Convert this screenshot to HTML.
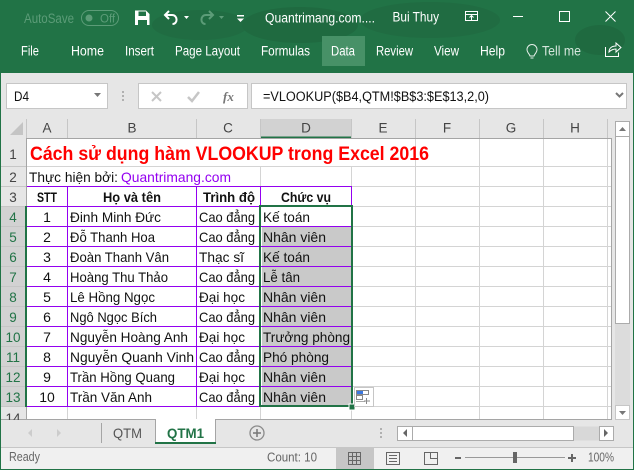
<!DOCTYPE html>
<html><head><meta charset="utf-8"><style>
html,body{margin:0;padding:0;background:#e6e6e6}
svg{display:block}
text{font-family:"Liberation Sans",sans-serif;white-space:pre}
.c{font-size:14px;fill:#111}
.b{font-size:14px;font-weight:bold;fill:#111}
.h{font-size:13.5px;fill:#444}
.r{font-size:13.5px;fill:#444;text-anchor:middle}
.w{font-size:13.5px;fill:#fff}
.l line,.l rect{shape-rendering:crispEdges}
</style></head><body>
<svg width="634" height="470" viewBox="0 0 634 470" xmlns="http://www.w3.org/2000/svg">
<!-- Title and ribbon -->
<rect width="634" height="73" fill="#217346"/>
<ellipse cx="200" cy="25" rx="48" ry="15" fill="#206c42"/>
<ellipse cx="300" cy="25" rx="58" ry="18" fill="#1f6a40"/>
<ellipse cx="430" cy="20" rx="70" ry="18" fill="#206c42"/>
<ellipse cx="600" cy="40" rx="25" ry="15" fill="#1f6a40"/>
<text x="24" y="23" class="w" style="fill:#5c9c78" textLength="50" lengthAdjust="spacingAndGlyphs">AutoSave</text>
<rect x="81.500" y="10.500" width="37" height="15" rx="7.500" fill="none" stroke="#5c9c78"/>
<circle cx="89" cy="18" r="3.500" fill="#5c9c78"/>
<text x="100" y="22.500" style="font-size:11.500px;fill:#5c9c78">Off</text>
<path d="M135 10.500h11l3.500 3.500v11h-14.500z" fill="#fff"/>
<rect x="138.500" y="11.500" width="7.500" height="4.500" fill="#217346"/>
<rect x="138" y="20" width="9" height="5" fill="#217346"/>
<path d="M169 11l-4 4 4 4M165.500 15h6.500c6 0 6 9 .5 9" fill="none" stroke="#fff" stroke-width="2"/>
<path d="M184 16h5l-2.500 3z" fill="#fff"/>
<path d="M209 11l4 4-4 4M212.500 15h-6.500c-6 0-6 9-.5 9" fill="none" stroke="#5c9c78" stroke-width="2"/>
<path d="M219 16h5l-2.500 3z" fill="#5c9c78"/>
<rect x="237" y="15" width="7" height="1.500" fill="#fff"/>
<path d="M237 18.500h7l-3.500 3.500z" fill="#fff"/>
<text x="265" y="22.500" class="w" style="font-size:13.500px" textLength="110" lengthAdjust="spacingAndGlyphs">Quantrimang.com....</text>
<text x="392.500" y="21.500" class="w" style="font-size:13.500px" textLength="46.500" lengthAdjust="spacingAndGlyphs">Bui Thuy</text>
<g fill="none" stroke="#fff">
<rect x="465.500" y="11.500" width="12" height="9"/>
<path d="M465 14.500h12M471.500 20v-4M469.500 17.500l2-2 2 2"/>
<path d="M513 16.500h10"/>
<rect x="559.500" y="11.500" width="10" height="10"/>
<path d="M605.500 11.500l10 10M615.500 11.500l-10 10"/>
</g>
<rect x="322" y="36" width="43" height="30" fill="#479167"/>
<g class="w">
<text x="21" y="55.500" class="w" textLength="18" lengthAdjust="spacingAndGlyphs">File</text>
<text x="71" y="55.500" class="w" textLength="33" lengthAdjust="spacingAndGlyphs">Home</text>
<text x="125" y="55.500" class="w" textLength="29" lengthAdjust="spacingAndGlyphs">Insert</text>
<text x="175" y="55.500" class="w" textLength="65" lengthAdjust="spacingAndGlyphs">Page Layout</text>
<text x="261" y="55.500" class="w" textLength="49" lengthAdjust="spacingAndGlyphs">Formulas</text>
<text x="331" y="55.500" class="w" textLength="24" lengthAdjust="spacingAndGlyphs">Data</text>
<text x="376" y="55.500" class="w" textLength="37" lengthAdjust="spacingAndGlyphs">Review</text>
<text x="434" y="55.500" class="w" textLength="25" lengthAdjust="spacingAndGlyphs">View</text>
<text x="480" y="55.500" class="w" textLength="25" lengthAdjust="spacingAndGlyphs">Help</text>
<text x="542" y="55.500" class="w" style="fill:#d5e6dc" textLength="39" lengthAdjust="spacingAndGlyphs">Tell me</text>
</g>
<path d="M530 56c-.5-2-3-3.500-3-6.500a5 5 0 0 1 10 0c0 3-2.500 4.500-3 6.500zM530.500 58h3" fill="none" stroke="#e5efe9"/>
<path d="M605.500 47v9.500h13v-4M609 52c0-4 3-6 7-6v-3l5 4.500-5 4.500v-3c-3 0-5 1-7 3z" fill="none" stroke="#fff"/>

<!-- Formula bar -->
<g class="l">
<rect x="1" y="73" width="632" height="46" fill="#e6e6e6"/>
<rect x="6.500" y="83.500" width="101" height="25" fill="#fff" stroke="#c6c6c6"/>
<rect x="138.500" y="83.500" width="109" height="25" fill="#fff" stroke="#c6c6c6"/>
<rect x="251.500" y="83.500" width="375" height="25" fill="#fff" stroke="#c6c6c6"/>
<rect x="122" y="91" width="2" height="2" fill="#b0b0b0"/>
<rect x="122" y="95" width="2" height="2" fill="#b0b0b0"/>
<rect x="122" y="99" width="2" height="2" fill="#b0b0b0"/>
</g>
<text x="14" y="101" class="c" style="font-size:13.500px" textLength="15" lengthAdjust="spacingAndGlyphs">D4</text>
<path d="M94 93h7l-3.500 4z" fill="#777"/>
<path d="M152 92l9 9M161 92l-9 9" stroke="#c6c6c6" stroke-width="2" fill="none"/>
<path d="M188 97l4 4 7-9" stroke="#c6c6c6" stroke-width="2.500" fill="none"/>
<text x="223" y="101" style="font-family:'Liberation Serif',serif;font-style:italic;font-weight:bold;font-size:13px;fill:#777">fx</text>
<text x="263" y="101" class="c" style="font-size:13.500px" textLength="226" lengthAdjust="spacingAndGlyphs">=VLOOKUP($B4,QTM!$B$3:$E$13,2,0)</text>
<path d="M616 93l3.500 3.500 3.500-3.500" fill="none" stroke="#777" stroke-width="2"/>

<!-- Sheet -->
<g class="l">
<rect x="1" y="119" width="610" height="19" fill="#e6e6e6"/>
<rect x="1" y="138" width="26" height="281" fill="#e6e6e6"/>
<rect x="27" y="138" width="584" height="281" fill="#fff"/>
<rect x="261" y="119" width="91" height="19" fill="#d2d2d2"/>
<rect x="261" y="136.500" width="91" height="2" fill="#217346"/>
<rect x="1" y="206" width="25" height="200" fill="#d2d2d2"/>
<g stroke="#c6c6c6">
<line x1="26.500" y1="119" x2="26.500" y2="138"/><line x1="67.500" y1="119" x2="67.500" y2="138"/><line x1="196.500" y1="119" x2="196.500" y2="138"/><line x1="260.500" y1="119" x2="260.500" y2="138"/><line x1="351.500" y1="119" x2="351.500" y2="138"/><line x1="415.500" y1="119" x2="415.500" y2="138"/><line x1="479.500" y1="119" x2="479.500" y2="138"/><line x1="543.500" y1="119" x2="543.500" y2="138"/><line x1="607.500" y1="119" x2="607.500" y2="138"/>
<line x1="1" y1="166.500" x2="26" y2="166.500"/><line x1="1" y1="186.500" x2="26" y2="186.500"/><line x1="1" y1="206.500" x2="26" y2="206.500"/><line x1="1" y1="226.500" x2="26" y2="226.500"/><line x1="1" y1="246.500" x2="26" y2="246.500"/><line x1="1" y1="266.500" x2="26" y2="266.500"/><line x1="1" y1="286.500" x2="26" y2="286.500"/><line x1="1" y1="306.500" x2="26" y2="306.500"/><line x1="1" y1="326.500" x2="26" y2="326.500"/><line x1="1" y1="346.500" x2="26" y2="346.500"/><line x1="1" y1="366.500" x2="26" y2="366.500"/><line x1="1" y1="386.500" x2="26" y2="386.500"/><line x1="1" y1="406.500" x2="26" y2="406.500"/>
</g>
<g stroke="#d4d4d4">
<line x1="27" y1="166.500" x2="611" y2="166.500"/>
<line x1="27" y1="186.500" x2="611" y2="186.500"/>
<line x1="352" y1="206.500" x2="611" y2="206.500"/><line x1="352" y1="226.500" x2="611" y2="226.500"/><line x1="352" y1="246.500" x2="611" y2="246.500"/><line x1="352" y1="266.500" x2="611" y2="266.500"/><line x1="352" y1="286.500" x2="611" y2="286.500"/><line x1="352" y1="306.500" x2="611" y2="306.500"/><line x1="352" y1="326.500" x2="611" y2="326.500"/><line x1="352" y1="346.500" x2="611" y2="346.500"/><line x1="352" y1="366.500" x2="611" y2="366.500"/><line x1="352" y1="386.500" x2="611" y2="386.500"/><line x1="352" y1="406.500" x2="611" y2="406.500"/>
<line x1="27" y1="406.500" x2="352" y2="406.500"/>
<line x1="415.500" y1="138" x2="415.500" y2="419"/><line x1="479.500" y1="138" x2="479.500" y2="419"/><line x1="543.500" y1="138" x2="543.500" y2="419"/><line x1="607.500" y1="138" x2="607.500" y2="419"/>
<line x1="351.500" y1="166" x2="351.500" y2="419"/>
<line x1="260.500" y1="166" x2="260.500" y2="186"/>
<line x1="67.500" y1="406" x2="67.500" y2="419"/><line x1="196.500" y1="406" x2="196.500" y2="419"/><line x1="260.500" y1="406" x2="260.500" y2="419"/>
</g>
<rect x="27" y="138" width="584" height="1" fill="#a5a5a5"/>
<rect x="611" y="138" width="1" height="282" fill="#a5a5a5"/>
<rect x="1" y="419" width="611" height="1" fill="#a5a5a5"/>
<rect x="26" y="138" width="1" height="68" fill="#a5a5a5"/>
<rect x="26" y="406" width="1" height="14" fill="#a5a5a5"/>
<rect x="262" y="227" width="89" height="178" fill="#c9c9c9"/>
<g stroke="#9400f0">
<line x1="27" y1="186.500" x2="352" y2="186.500"/>
<line x1="27" y1="206.500" x2="352" y2="206.500"/>
<line x1="27" y1="226.500" x2="352" y2="226.500"/><line x1="27" y1="246.500" x2="352" y2="246.500"/><line x1="27" y1="266.500" x2="352" y2="266.500"/><line x1="27" y1="286.500" x2="352" y2="286.500"/><line x1="27" y1="306.500" x2="352" y2="306.500"/><line x1="27" y1="326.500" x2="352" y2="326.500"/><line x1="27" y1="346.500" x2="352" y2="346.500"/><line x1="27" y1="366.500" x2="352" y2="366.500"/><line x1="27" y1="386.500" x2="352" y2="386.500"/><line x1="27" y1="406.500" x2="352" y2="406.500"/>
<line x1="67.500" y1="186" x2="67.500" y2="406"/><line x1="196.500" y1="186" x2="196.500" y2="406"/><line x1="260.500" y1="186" x2="260.500" y2="406"/><line x1="351.500" y1="186" x2="351.500" y2="206"/>
</g>
<rect x="25" y="206" width="2" height="201" fill="#217346"/>
<rect x="260" y="206" width="92" height="200" fill="none" stroke="#217346" stroke-width="2"/>
<rect x="349" y="404" width="6" height="6" fill="#217346" stroke="#fff"/>
<rect x="354.500" y="387.500" width="19" height="19" fill="#fff" stroke="#c6c6c6"/>
<rect x="357" y="391" width="6" height="3.500" fill="#3c78e0"/>
<rect x="356.500" y="390.500" width="12" height="4" fill="none" stroke="#888"/>
<rect x="356.500" y="395.500" width="6" height="4" fill="none" stroke="#888"/>
<rect x="356" y="401" width="9" height="1" fill="#aaa"/>
<rect x="366" y="398" width="1" height="6" fill="#888"/>
<rect x="364" y="400.500" width="6" height="1" fill="#888"/>
<path d="M23 122v13h-13z" fill="#c4c4c4"/>
</g>
<g>
<text x="47" y="132.500" class="r">A</text><text x="132" y="132.500" class="r">B</text><text x="228" y="132.500" class="r">C</text><text x="306" y="132.500" class="r">D</text><text x="383" y="132.500" class="r">E</text><text x="447" y="132.500" class="r">F</text><text x="511" y="132.500" class="r">G</text><text x="575" y="132.500" class="r">H</text>
<text x="13" y="159" class="r">1</text><text x="13" y="182" class="r">2</text><text x="13" y="202" class="r">3</text>
<text x="13" y="222" class="r" style="fill:#217346">4</text><text x="13" y="242" class="r" style="fill:#217346">5</text><text x="13" y="262" class="r" style="fill:#217346">6</text><text x="13" y="282" class="r" style="fill:#217346">7</text><text x="13" y="302" class="r" style="fill:#217346">8</text><text x="13" y="322" class="r" style="fill:#217346">9</text><text x="13" y="342" class="r" style="fill:#217346">10</text><text x="13" y="362" class="r" style="fill:#217346">11</text><text x="13" y="382" class="r" style="fill:#217346">12</text><text x="13" y="402" class="r" style="fill:#217346">13</text>
<text x="13" y="423" class="r">14</text>
</g>
<rect x="1" y="420" width="632" height="28" fill="#e6e6e6"/>
<text x="30" y="160" style="font-size:19px;font-weight:bold;fill:#ff0000" textLength="399" lengthAdjust="spacingAndGlyphs">Cách sử dụng hàm VLOOKUP trong Excel 2016</text>
<text x="29" y="182" class="c" textLength="89" lengthAdjust="spacingAndGlyphs">Thực hiện bởi:</text>
<text x="121" y="182" class="c" style="fill:#9400f0" textLength="110" lengthAdjust="spacingAndGlyphs">Quantrimang.com</text>
<text x="37" y="202" class="b" textLength="20" lengthAdjust="spacingAndGlyphs">STT</text>
<text x="103" y="202" class="b" textLength="58" lengthAdjust="spacingAndGlyphs">Họ và tên</text>
<text x="203" y="202" class="b" textLength="52" lengthAdjust="spacingAndGlyphs">Trình độ</text>
<text x="281" y="202" class="b" textLength="50" lengthAdjust="spacingAndGlyphs">Chức vụ</text>
<g text-anchor="middle">
<text x="47" y="222" class="c">1</text><text x="47" y="242" class="c">2</text><text x="47" y="262" class="c">3</text><text x="47" y="282" class="c">4</text><text x="47" y="302" class="c">5</text><text x="47" y="322" class="c">6</text><text x="47" y="342" class="c">7</text><text x="47" y="362" class="c">8</text><text x="47" y="382" class="c">9</text><text x="47" y="402" class="c">10</text>
</g>
<text x="70" y="222" class="c" textLength="91" lengthAdjust="spacingAndGlyphs">Đinh Minh Đức</text>
<text x="70" y="242" class="c" textLength="85" lengthAdjust="spacingAndGlyphs">Đỗ Thanh Hoa</text>
<text x="70" y="262" class="c" textLength="99" lengthAdjust="spacingAndGlyphs">Đoàn Thanh Vân</text>
<text x="70" y="282" class="c" textLength="98" lengthAdjust="spacingAndGlyphs">Hoàng Thu Thảo</text>
<text x="70" y="302" class="c" textLength="85" lengthAdjust="spacingAndGlyphs">Lê Hồng Ngọc</text>
<text x="70" y="322" class="c" textLength="87" lengthAdjust="spacingAndGlyphs">Ngô Ngọc Bích</text>
<text x="70" y="342" class="c" textLength="118" lengthAdjust="spacingAndGlyphs">Nguyễn Hoàng Anh</text>
<text x="70" y="362" class="c" textLength="124" lengthAdjust="spacingAndGlyphs">Nguyễn Quanh Vinh</text>
<text x="70" y="382" class="c" textLength="105" lengthAdjust="spacingAndGlyphs">Trần Hồng Quang</text>
<text x="70" y="402" class="c" textLength="82" lengthAdjust="spacingAndGlyphs">Trần Văn Anh</text>
<text x="199" y="222" class="c" textLength="56" lengthAdjust="spacingAndGlyphs">Cao đẳng</text>
<text x="199" y="242" class="c" textLength="56" lengthAdjust="spacingAndGlyphs">Cao đẳng</text>
<text x="199" y="262" class="c" textLength="45" lengthAdjust="spacingAndGlyphs">Thạc sĩ</text>
<text x="199" y="282" class="c" textLength="56" lengthAdjust="spacingAndGlyphs">Cao đẳng</text>
<text x="199" y="302" class="c" textLength="46" lengthAdjust="spacingAndGlyphs">Đại học</text>
<text x="199" y="322" class="c" textLength="56" lengthAdjust="spacingAndGlyphs">Cao đẳng</text>
<text x="199" y="342" class="c" textLength="46" lengthAdjust="spacingAndGlyphs">Đại học</text>
<text x="199" y="362" class="c" textLength="56" lengthAdjust="spacingAndGlyphs">Cao đẳng</text>
<text x="199" y="382" class="c" textLength="46" lengthAdjust="spacingAndGlyphs">Đại học</text>
<text x="199" y="402" class="c" textLength="56" lengthAdjust="spacingAndGlyphs">Cao đẳng</text>
<text x="263" y="222" class="c" textLength="47" lengthAdjust="spacingAndGlyphs">Kế toán</text>
<text x="263" y="242" class="c" textLength="63" lengthAdjust="spacingAndGlyphs">Nhân viên</text>
<text x="263" y="262" class="c" textLength="47" lengthAdjust="spacingAndGlyphs">Kế toán</text>
<text x="263" y="282" class="c" textLength="37" lengthAdjust="spacingAndGlyphs">Lễ tân</text>
<text x="263" y="302" class="c" textLength="63" lengthAdjust="spacingAndGlyphs">Nhân viên</text>
<text x="263" y="322" class="c" textLength="63" lengthAdjust="spacingAndGlyphs">Nhân viên</text>
<text x="263" y="342" class="c" textLength="87" lengthAdjust="spacingAndGlyphs">Trưởng phòng</text>
<text x="263" y="362" class="c" textLength="66" lengthAdjust="spacingAndGlyphs">Phó phòng</text>
<text x="263" y="382" class="c" textLength="63" lengthAdjust="spacingAndGlyphs">Nhân viên</text>
<text x="263" y="402" class="c" textLength="63" lengthAdjust="spacingAndGlyphs">Nhân viên</text>

<g class="l">
<rect x="615" y="121" width="15" height="299" fill="#dcdcdc"/>
<rect x="615.500" y="121.500" width="14" height="15" fill="#fff" stroke="#ababab"/>
<rect x="615.500" y="136.500" width="14" height="187" fill="#fff" stroke="#ababab"/>
<rect x="615.500" y="405.500" width="14" height="14" fill="#fff" stroke="#c6c6c6"/>
</g>
<path d="M619 131h7l-3.500-4z" fill="#777"/>
<path d="M619 411h7l-3.500 4z" fill="#777"/>

<g class="l">
<rect x="101" y="423" width="1" height="20" fill="#a5a5a5"/>
<rect x="155" y="419" width="60" height="24" fill="#fff"/>
<rect x="155" y="419" width="1" height="24" fill="#a5a5a5"/>
<rect x="215" y="419" width="1" height="24" fill="#a5a5a5"/>
<rect x="155" y="442" width="61" height="2" fill="#217346"/>
<rect x="380" y="428" width="2" height="2" fill="#b0b0b0"/>
<rect x="380" y="432" width="2" height="2" fill="#b0b0b0"/>
<rect x="380" y="436" width="2" height="2" fill="#b0b0b0"/>
<rect x="397.500" y="426.500" width="202" height="14" fill="#d8d8d8" stroke="none"/>
<rect x="397.500" y="426.500" width="15" height="14" fill="#fff" stroke="#ababab"/>
<rect x="412.500" y="426.500" width="161" height="14" fill="#fff" stroke="#ababab"/>
<rect x="599.500" y="426.500" width="14" height="14" fill="#fff" stroke="#ababab"/>
</g>
<path d="M32 429v8l-4-4z" fill="#ccc"/>
<path d="M57 429v8l4-4z" fill="#ccc"/>
<path d="M407 429v8l-4-4z" fill="#666"/>
<path d="M604 429v8l4-4z" fill="#666"/>
<text x="113" y="438" class="c" style="fill:#555" textLength="29" lengthAdjust="spacingAndGlyphs">QTM</text>
<text x="167" y="438" class="b" style="fill:#217346" textLength="37" lengthAdjust="spacingAndGlyphs">QTM1</text>
<circle cx="257" cy="433" r="7" fill="none" stroke="#8a8a8a" stroke-width="1.300"/>
<path d="M257 429v8M253 433h8" stroke="#777" stroke-width="1.500"/>

<g class="l">
<rect x="1" y="447" width="632" height="1" fill="#c6c6c6"/>
<rect x="1" y="448" width="632" height="21" fill="#f0f0f0"/>
<rect x="336" y="448" width="38" height="21" fill="#c6c6c6"/>
<g fill="none" stroke="#666">
<rect x="348.500" y="452.500" width="12" height="12"/>
<path d="M352.500 452v13M356.500 452v13M348 456.500h13M348 460.500h13"/>
<rect x="386.500" y="452.500" width="13" height="12"/>
<path d="M389 455.500h8M389 458.500h8M389 461.500h8"/>
<rect x="424.500" y="452.500" width="13" height="12"/>
<path d="M430.500 452v6.500h7"/>
</g>
<rect x="455" y="457" width="6" height="2" fill="#666"/>
<rect x="465" y="457" width="100" height="1" fill="#999"/>
<rect x="513" y="452" width="4" height="11" fill="#666"/>
<rect x="568" y="457" width="8" height="2" fill="#666"/>
<rect x="571" y="454" width="2" height="8" fill="#666"/>
</g>
<text x="9" y="461" style="font-size:12.500px;fill:#666" textLength="31" lengthAdjust="spacingAndGlyphs">Ready</text>
<text x="267" y="461.500" style="font-size:12.500px;fill:#666" textLength="50" lengthAdjust="spacingAndGlyphs">Count: 10</text>
<text x="588" y="461.500" style="font-size:12.500px;fill:#666" textLength="26" lengthAdjust="spacingAndGlyphs">100%</text>

<g class="l">
<rect x="0" y="73" width="1" height="397" fill="#217346"/>
<rect x="633" y="73" width="1" height="397" fill="#217346"/>
<rect x="0" y="469" width="634" height="1" fill="#217346"/>
</g>
</svg>
</body></html>
